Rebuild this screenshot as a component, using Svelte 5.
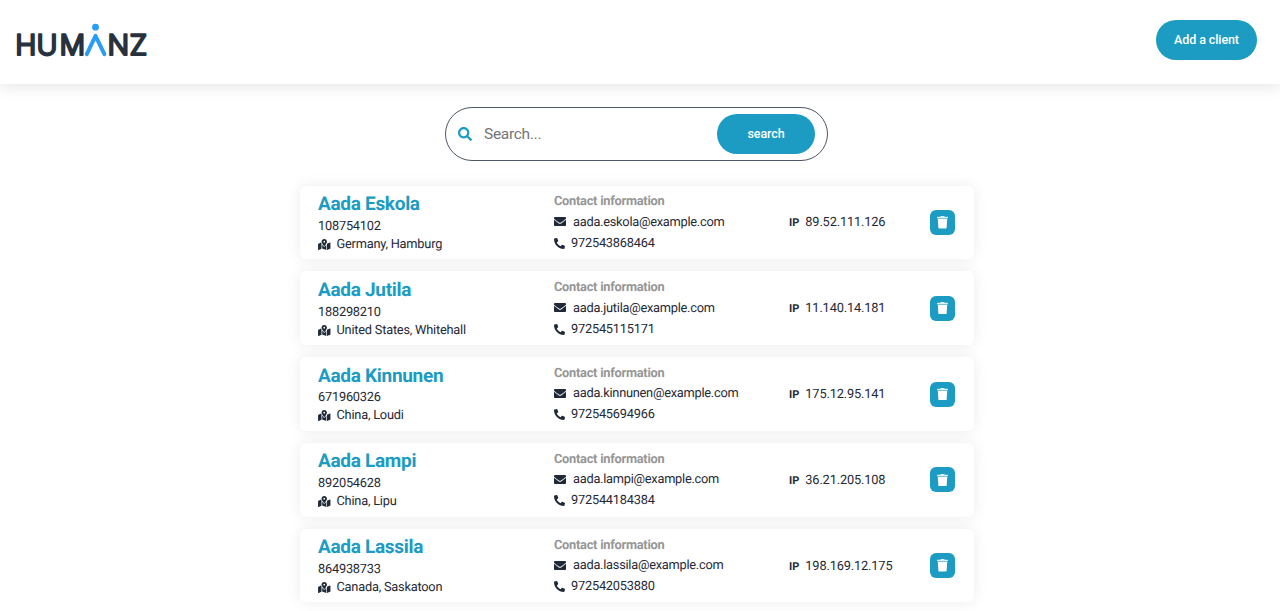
<script>
  const clients = [
    { id: '108754102', name: 'Aada Eskola', location: 'Germany, Hamburg', email: 'aada.eskola@example.com', phone: '972543868464', ip: '89.52.111.126' },
    { id: '188298210', name: 'Aada Jutila', location: 'United States, Whitehall', email: 'aada.jutila@example.com', phone: '972545115171', ip: '11.140.14.181' },
    { id: '671960326', name: 'Aada Kinnunen', location: 'China, Loudi', email: 'aada.kinnunen@example.com', phone: '972545694966', ip: '175.12.95.141' },
    { id: '892054628', name: 'Aada Lampi', location: 'China, Lipu', email: 'aada.lampi@example.com', phone: '972544184384', ip: '36.21.205.108' },
    { id: '864938733', name: 'Aada Lassila', location: 'Canada, Saskatoon', email: 'aada.lassila@example.com', phone: '972542053880', ip: '198.169.12.175' },
  ]

  let list = $state(clients)
  let query = $state('')
  let applied = $state('')

  let visible = $derived(
    list.filter((c) => c.name.toLowerCase().includes(applied.toLowerCase()))
  )

  function search(e) {
    e.preventDefault()
    applied = query
  }

  function remove(id) {
    list = list.filter((c) => c.id !== id)
  }
</script>

<div class="page">
  <header>
    <svg class="logo" viewBox="0 0 132 34" role="img" aria-label="Humanz">
      <g class="wordmark">
        <text y="31.6" x="-0.8 20.4 43.4">HUM</text>
        <text y="31.6" x="91.4 113.6">NZ</text>
      </g>
      <path class="figure" d="M70.8 31.2 79.5 12.8 88.4 31.2" />
      <circle cx="79.5" cy="4.2" r="3.4" fill="#2a9df4" />
    </svg>
    <button class="btn add">Add a client</button>
  </header>

  <main>
    <form class="search" onsubmit={search}>
      <svg class="lens" viewBox="0 0 512 512">
        <path d="M505 442.7L405.3 343c-4.5-4.5-10.6-7-17-7H372c27.6-35.3 44-79.7 44-128C416 93.1 322.9 0 208 0S0 93.1 0 208s93.1 208 208 208c48.3 0 92.7-16.4 128-44v16.3c0 6.4 2.5 12.5 7 17l99.7 99.7c9.4 9.4 24.6 9.4 33.9 0l28.3-28.3c9.4-9.4 9.4-24.6.1-34zM208 336c-70.7 0-128-57.2-128-128 0-70.7 57.2-128 128-128 70.7 0 128 57.2 128 128 0 70.7-57.2 128-128 128z" />
      </svg>
      <input type="text" placeholder="Search..." bind:value={query} />
      <button class="btn" type="submit">search</button>
    </form>

    <div class="list">
      {#each visible as client (client.id)}
        <article class="card">
          <div class="who">
            <h2>{client.name}</h2>
            <p>{client.id}</p>
            <p class="line">
              <svg class="map" viewBox="0 0 576 512">
                <path d="M288 0c-69.59 0-126 56.41-126 126 0 56.26 82.35 158.8 113.9 196.02 6.39 7.54 17.82 7.54 24.2 0C331.65 284.8 414 182.26 414 126 414 56.41 357.59 0 288 0zm0 168c-23.2 0-42-18.8-42-42s18.8-42 42-42 42 18.8 42 42-18.8 42-42 42zM20.12 215.95A32.006 32.006 0 0 0 0 245.66v250.32c0 11.32 11.43 19.06 21.94 14.86L160 448V214.92c-8.84-15.98-16.07-31.54-21.25-46.42L20.12 215.95zM288 359.67c-14.07 0-27.38-6.18-36.51-16.96-19.66-23.2-40.57-49.62-59.49-76.72v182l192 64V266c-18.92 27.09-39.82 53.52-59.49 76.72-9.13 10.77-22.44 16.95-36.51 16.95zm266.06-198.51L416 224v288l139.88-55.95A31.996 31.996 0 0 0 576 426.34V176.02c0-11.32-11.43-19.06-21.94-14.86z" />
              </svg>
              <span>{client.location}</span>
            </p>
          </div>

          <div class="contact">
            <h3>Contact information</h3>
            <p class="line mail">
              <svg class="envelope" viewBox="0 64 512 384">
                <path d="M502.3 190.8c3.9-3.1 9.7-.2 9.7 4.7V400c0 26.5-21.5 48-48 48H48c-26.5 0-48-21.5-48-48V195.6c0-5 5.7-7.8 9.7-4.7 22.4 17.4 52.1 39.5 154.1 113.6 21.1 15.4 56.7 47.8 92.2 47.6 35.7.3 72-32.8 92.3-47.6 102-74.1 131.6-96.3 154-113.7zM256 320c23.2.4 56.6-29.2 73.4-41.4 132.7-96.3 142.8-104.7 173.4-128.7 5.8-4.5 9.2-11.5 9.2-18.9v-19c0-26.5-21.5-48-48-48H48c-26.5 0-48 21.5-48 48v19c0 7.4 3.4 14.3 9.2 18.9 30.6 23.9 40.7 32.4 173.4 128.7 16.8 12.2 50.2 41.8 73.4 41.4z" />
              </svg>
              <span>{client.email}</span>
            </p>
            <p class="line phone">
              <svg class="handset" viewBox="0 0 512 512">
                <path d="M493.4 24.6l-104-24c-11.3-2.6-22.9 3.3-27.5 13.9l-48 112c-4.2 9.8-1.4 21.3 6.9 28l60.6 49.6c-36 76.7-98.9 140.5-177.2 177.2l-49.6-60.6c-6.8-8.3-18.2-11.1-28-6.9l-112 48C3.9 366.5-2 378.1.6 389.4l24 104C27.1 504.2 36.7 512 48 512c256.1 0 464-207.5 464-464 0-11.2-7.7-20.9-18.6-23.4z" transform="matrix(-1 0 0 1 512 0)" />
              </svg>
              <span>{client.phone}</span>
            </p>
          </div>

          <div class="ip"><b>IP</b><span>{client.ip}</span></div>

          <button class="delete" aria-label="Delete client" onclick={() => remove(client.id)}>
            <svg viewBox="0 0 448 512">
              <path d="M432 32H312l-9.4-18.7A24 24 0 0 0 281.1 0H166.8a23.72 23.72 0 0 0-21.4 13.3L136 32H16A16 16 0 0 0 0 48v32a16 16 0 0 0 16 16h416a16 16 0 0 0 16-16V48a16 16 0 0 0-16-16z" opacity="0.85" />
              <path d="M32 112l21.2 355a48 48 0 0 0 47.9 45h245.8a48 48 0 0 0 47.9-45L416 112z" />
            </svg>
          </button>
        </article>
      {/each}
    </div>
  </main>
</div>

<style>
  :global(body) {
    margin: 0;
    background: #fff;
  }

  .page {
    height: 611px;
    overflow: hidden;
    font-family: Roboto, 'Liberation Sans', sans-serif;
    color: #1f2937;
    text-rendering: geometricPrecision;
  }

  header {
    display: flex;
    align-items: flex-start;
    justify-content: space-between;
    box-sizing: border-box;
    height: 84px;
    padding: 20px 23px 0 16px;
    box-shadow: 0 3px 14px rgba(0, 0, 0, 0.1);
  }

  .logo {
    width: 132px;
    height: 34px;
    margin-top: 3px;
    overflow: visible;
  }

  .wordmark {
    font-family: Inter, sans-serif;
    font-size: 28.5px;
    font-weight: 300;
    fill: #28323f;
    stroke: #28323f;
    stroke-width: 2.2;
    stroke-linejoin: round;
  }

  .figure {
    fill: none;
    stroke: #2a9df4;
    stroke-width: 4;
    stroke-linecap: round;
    stroke-linejoin: round;
  }

  .btn {
    height: 40px;
    width: 98px;
    padding: 0 0 1px;
    border: 0;
    border-radius: 20px;
    background: #1c9bc3;
    color: #fff;
    font: 500 12.5px Roboto, sans-serif;
    letter-spacing: -0.1px;
    cursor: pointer;
  }

  .add {
    width: 101px;
  }

  /* ── Search ── */
  .search {
    display: flex;
    align-items: center;
    box-sizing: border-box;
    width: 383px;
    height: 54px;
    margin: 23px 0 0 445px;
    padding: 0 12px;
    border: 1px solid #4b5563;
    border-radius: 27px;
  }

  .lens {
    width: 14px;
    height: 14px;
    fill: #1c9bc3;
  }

  input {
    flex: 1;
    min-width: 0;
    padding: 0 0 0 12px;
    border: 0;
    outline: 0;
    background: none;
    font: 400 15.5px Roboto, sans-serif;
    letter-spacing: -0.3px;
    color: inherit;
  }

  input::placeholder {
    color: #757575;
  }

  /* ── Client cards ── */
  .list {
    display: flex;
    flex-direction: column;
    gap: 12.3px;
    width: 674px;
    margin: 24.7px 0 0 300px;
  }

  .card {
    display: grid;
    grid-template-columns: 236px 235px 141px 25px;
    box-sizing: border-box;
    height: 73.5px;
    padding-left: 18px;
    border-radius: 6px;
    background: #fff;
    box-shadow: 0 0 15px rgba(0, 0, 0, 0.08);
    font-size: 12.8px;
    line-height: 18px;
    letter-spacing: -0.25px;
  }

  h2,
  h3,
  p {
    margin: 0;
  }

  h2 {
    margin: 5.4px 0 1.1px;
    font-size: 19px;
    font-weight: 700;
    line-height: 25.6px;
    letter-spacing: -0.3px;
    color: #1c9bc3;
  }

  h3 {
    margin-top: 7.8px;
    font-size: 12.8px;
    font-weight: 700;
    color: #969696;
  }

  .line {
    display: flex;
    align-items: center;
  }

  .line svg {
    flex: none;
    fill: #1f2937;
  }

  .map {
    width: 12.5px;
    height: 11px;
    margin: -1px 6px 0 0;
  }

  .mail {
    margin-top: 2.4px;
  }

  .envelope {
    width: 12px;
    height: 9px;
    margin: -2px 7px 0 0;
  }

  .phone {
    margin-top: 3px;
  }

  .handset {
    width: 11px;
    height: 11px;
    margin: -1px 6px 0 0;
  }

  .who p,
  .phone {
    letter-spacing: -0.22px;
  }

  .ip {
    display: flex;
    align-items: center;
    gap: 6px;
    padding-top: 2px;
    letter-spacing: -0.15px;
  }

  .ip b {
    font-size: 11px;
    letter-spacing: 0;
  }

  .delete {
    display: flex;
    align-items: center;
    justify-content: center;
    align-self: center;
    width: 25px;
    height: 25px;
    padding: 0;
    border: 0;
    border-radius: 6px;
    background: #1c9bc3;
    cursor: pointer;
  }

  .delete svg {
    width: 11px;
    height: 12.5px;
    fill: #fff;
  }
</style>
